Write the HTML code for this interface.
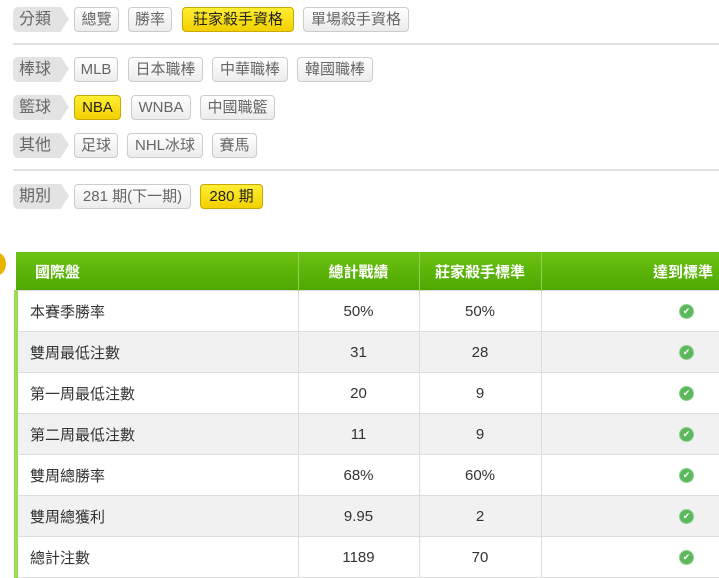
<!DOCTYPE html>
<html><head><meta charset="utf-8"><style>
body{margin:0;width:719px;height:575px;overflow:hidden;background:#fff;font-family:"Liberation Sans","Noto Sans CJK TC",sans-serif;position:relative}
.t{position:absolute;left:13px;width:42px;height:25px;background:#e3e3e3;color:#666;font-size:16px;line-height:25px;padding-left:6px;border-radius:5px 0 0 5px}
.t:after{content:"";position:absolute;right:-8px;top:0;border-left:8px solid #e3e3e3;border-top:12.5px solid transparent;border-bottom:12.5px solid transparent}
.b{position:absolute;height:23px;border:1px solid #ccc;border-radius:4px;background:linear-gradient(#fff,#ececec);color:#666;font-size:15px;line-height:23px;text-align:center;box-sizing:content-box}
.y{background:linear-gradient(#ffee33,#f2d000);border-color:#c9a800;color:#222}
.hr{position:absolute;left:13px;right:0;height:2px;background:#e2e2e2}
table{position:absolute;left:14px;top:252px;border-collapse:collapse;width:720px;font-size:15px;color:#333;table-layout:fixed}
th{height:38px;padding:0;background:linear-gradient(#6cc214,#4ea800);color:#fff;font-weight:bold;font-size:15px;border-right:1px solid #8fd34f}
td{height:40px;padding:0;border:1px solid #ddd;text-align:center;vertical-align:middle}
tr td:first-child{text-align:left;padding-left:12px;border-left:4px solid #9edb55}
tr:nth-child(odd) td{background:#f1f1f1}
.ck{display:inline-block;vertical-align:middle;width:13px;height:13px;border-radius:50%;background:#5cb85c;color:#fff;font-size:9px;line-height:13px;text-align:center;box-shadow:0 0 0 1px #8ccf8c}
td.c{text-align:right;padding-right:40px}
</style></head><body>
<div class="t" style="top:7px">分類</div>
<div class="b" style="left:74px;top:7px;width:43px">總覽</div>
<div class="b" style="left:128px;top:7px;width:42px">勝率</div>
<div class="b y" style="left:182px;top:7px;width:110px">莊家殺手資格</div>
<div class="b" style="left:303px;top:7px;width:104px">單場殺手資格</div>
<div class="hr" style="top:43px"></div>
<div class="t" style="top:57px">棒球</div>
<div class="b" style="left:74px;top:57px;width:42px">MLB</div>
<div class="b" style="left:128px;top:57px;width:73px">日本職棒</div>
<div class="b" style="left:212px;top:57px;width:74px">中華職棒</div>
<div class="b" style="left:297px;top:57px;width:74px">韓國職棒</div>
<div class="t" style="top:95px">籃球</div>
<div class="b y" style="left:74px;top:95px;width:45px">NBA</div>
<div class="b" style="left:131px;top:95px;width:58px">WNBA</div>
<div class="b" style="left:200px;top:95px;width:73px">中國職籃</div>
<div class="t" style="top:133px">其他</div>
<div class="b" style="left:74px;top:133px;width:42px">足球</div>
<div class="b" style="left:127px;top:133px;width:74px">NHL冰球</div>
<div class="b" style="left:212px;top:133px;width:43px">賽馬</div>
<div class="hr" style="top:169px"></div>
<div class="t" style="top:184px">期別</div>
<div class="b" style="left:74px;top:184px;width:115px">281 期(下一期)</div>
<div class="b y" style="left:200px;top:184px;width:61px">280 期</div>
<div style="position:absolute;left:-10px;top:253px;width:16px;height:22px;border-radius:50%;background:#e8b400"></div>
<table>
<colgroup><col style="width:282px"><col style="width:121px"><col style="width:122px"><col></colgroup>
<tr><th style="text-align:left;padding-left:19px">國際盤</th><th>總計戰績</th><th>莊家殺手標準</th><th style="text-align:right;padding-right:20px">達到標準</th></tr>
<tr><td>本賽季勝率</td><td>50%</td><td>50%</td><td class="c"><span class="ck">✔</span></td></tr>
<tr><td>雙周最低注數</td><td>31</td><td>28</td><td class="c"><span class="ck">✔</span></td></tr>
<tr><td>第一周最低注數</td><td>20</td><td>9</td><td class="c"><span class="ck">✔</span></td></tr>
<tr><td>第二周最低注數</td><td>11</td><td>9</td><td class="c"><span class="ck">✔</span></td></tr>
<tr><td>雙周總勝率</td><td>68%</td><td>60%</td><td class="c"><span class="ck">✔</span></td></tr>
<tr><td>雙周總獲利</td><td>9.95</td><td>2</td><td class="c"><span class="ck">✔</span></td></tr>
<tr><td>總計注數</td><td>1189</td><td>70</td><td class="c"><span class="ck">✔</span></td></tr>
</table>
</body></html>
